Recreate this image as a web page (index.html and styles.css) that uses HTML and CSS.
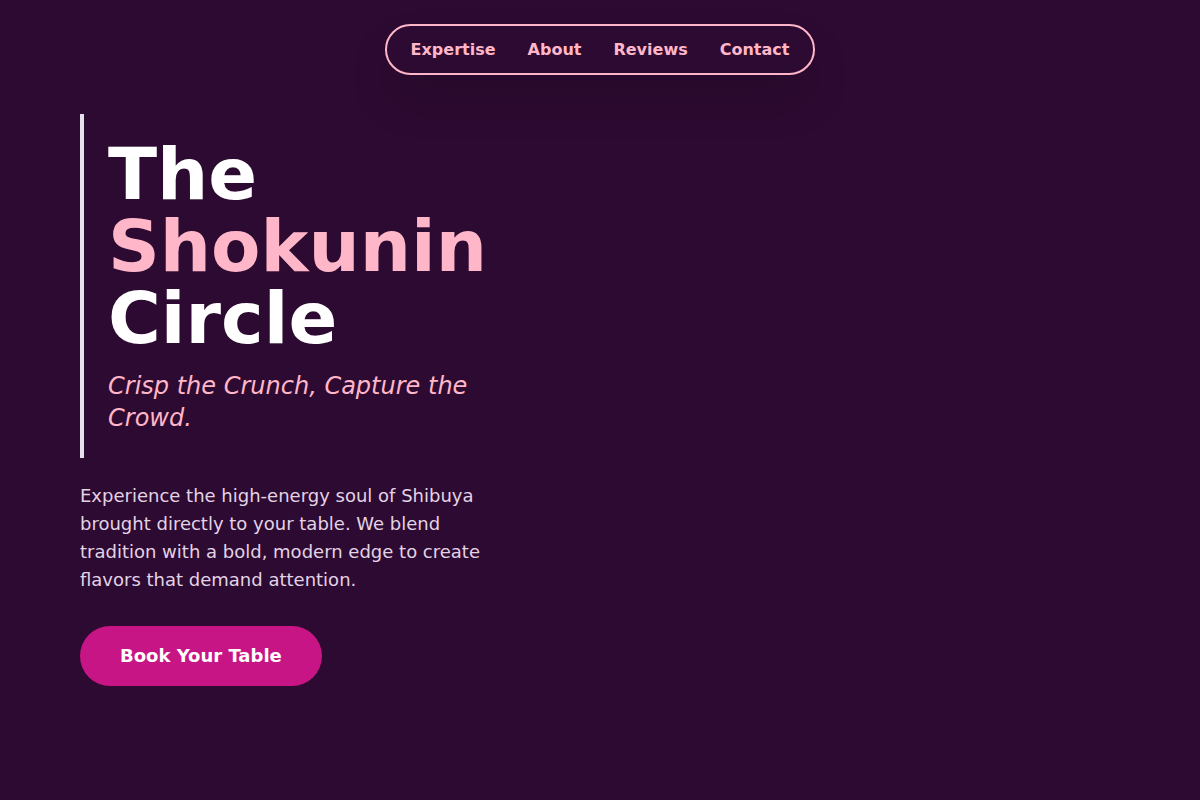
FILE: index.html
```html
<!DOCTYPE html>
<html lang="en">
<head>
    <meta charset="UTF-8">
    <meta name="viewport" content="width=device-width, initial-scale=1.0">
    <title>The Shokunin Circle</title>
    <link rel="stylesheet" href="styles.css">
</head>
<body>
    <header class="site-header">
        <nav class="nav-pill">
            <a href="#expertise">Expertise</a>
            <a href="#about">About</a>
            <a href="#reviews">Reviews</a>
            <a href="#contact">Contact</a>
        </nav>
    </header>

    <main class="hero">
        <div class="hero-title">
            <h1>The <span class="accent">Shokunin</span> Circle</h1>
            <p class="tagline">Crisp the Crunch, Capture the Crowd.</p>
        </div>
        <p class="intro">Experience the high-energy soul of Shibuya brought directly to your table. We blend tradition with a bold, modern edge to create flavors that demand attention.</p>
        <a href="#book" class="btn-book">Book Your Table</a>
    </main>
</body>
</html>
```

FILE: styles.css
```css
/* Global Styles */

* {
    margin: 0;
    padding: 0;
    box-sizing: border-box;
}

body {
    font-family: 'DejaVu Sans', sans-serif;
    background-color: #2d0a31;
    color: #fff;
    min-height: 100vh;
}

a {
    text-decoration: none;
}

/* Header / Nav */

.site-header {
    display: flex;
    justify-content: center;
    padding-top: 24px;
}

.nav-pill {
    display: flex;
    gap: 32px;
    padding: 14px 24px;
    border: 2px solid #ffb6c8;
    border-radius: 999px;
    background-color: #2d0a31;
    box-shadow: 0 25px 50px -12px rgba(0, 0, 0, 0.25);
}

.nav-pill a {
    color: #ffb6c8;
    font-weight: bold;
    font-size: 16px;
    line-height: 19px;
}

/* Hero */

.hero {
    max-width: 500px;
    padding: 39px 0 0 80px;
}

.hero-title {
    border-left: 4px solid #e8e0ec;
    padding: 24px 0 24px 24px;
    margin-bottom: 24px;
}

.hero-title h1 {
    font-size: 72px;
    line-height: 72px;
    font-weight: bold;
    color: #fff;
}

.hero-title .accent {
    color: #ffb6c8;
}

.tagline {
    margin-top: 16px;
    font-size: 24px;
    line-height: 32px;
    font-style: italic;
    color: #ffb6c8;
}

.intro {
    max-width: 420px;
    font-size: 18px;
    line-height: 28px;
    color: #e3d3e6;
    margin-bottom: 32px;
}

.btn-book {
    display: inline-block;
    padding: 20px 40px;
    background-color: #c71585;
    color: #fff;
    font-weight: bold;
    font-size: 18px;
    line-height: 20px;
    border-radius: 30px;
}
```
